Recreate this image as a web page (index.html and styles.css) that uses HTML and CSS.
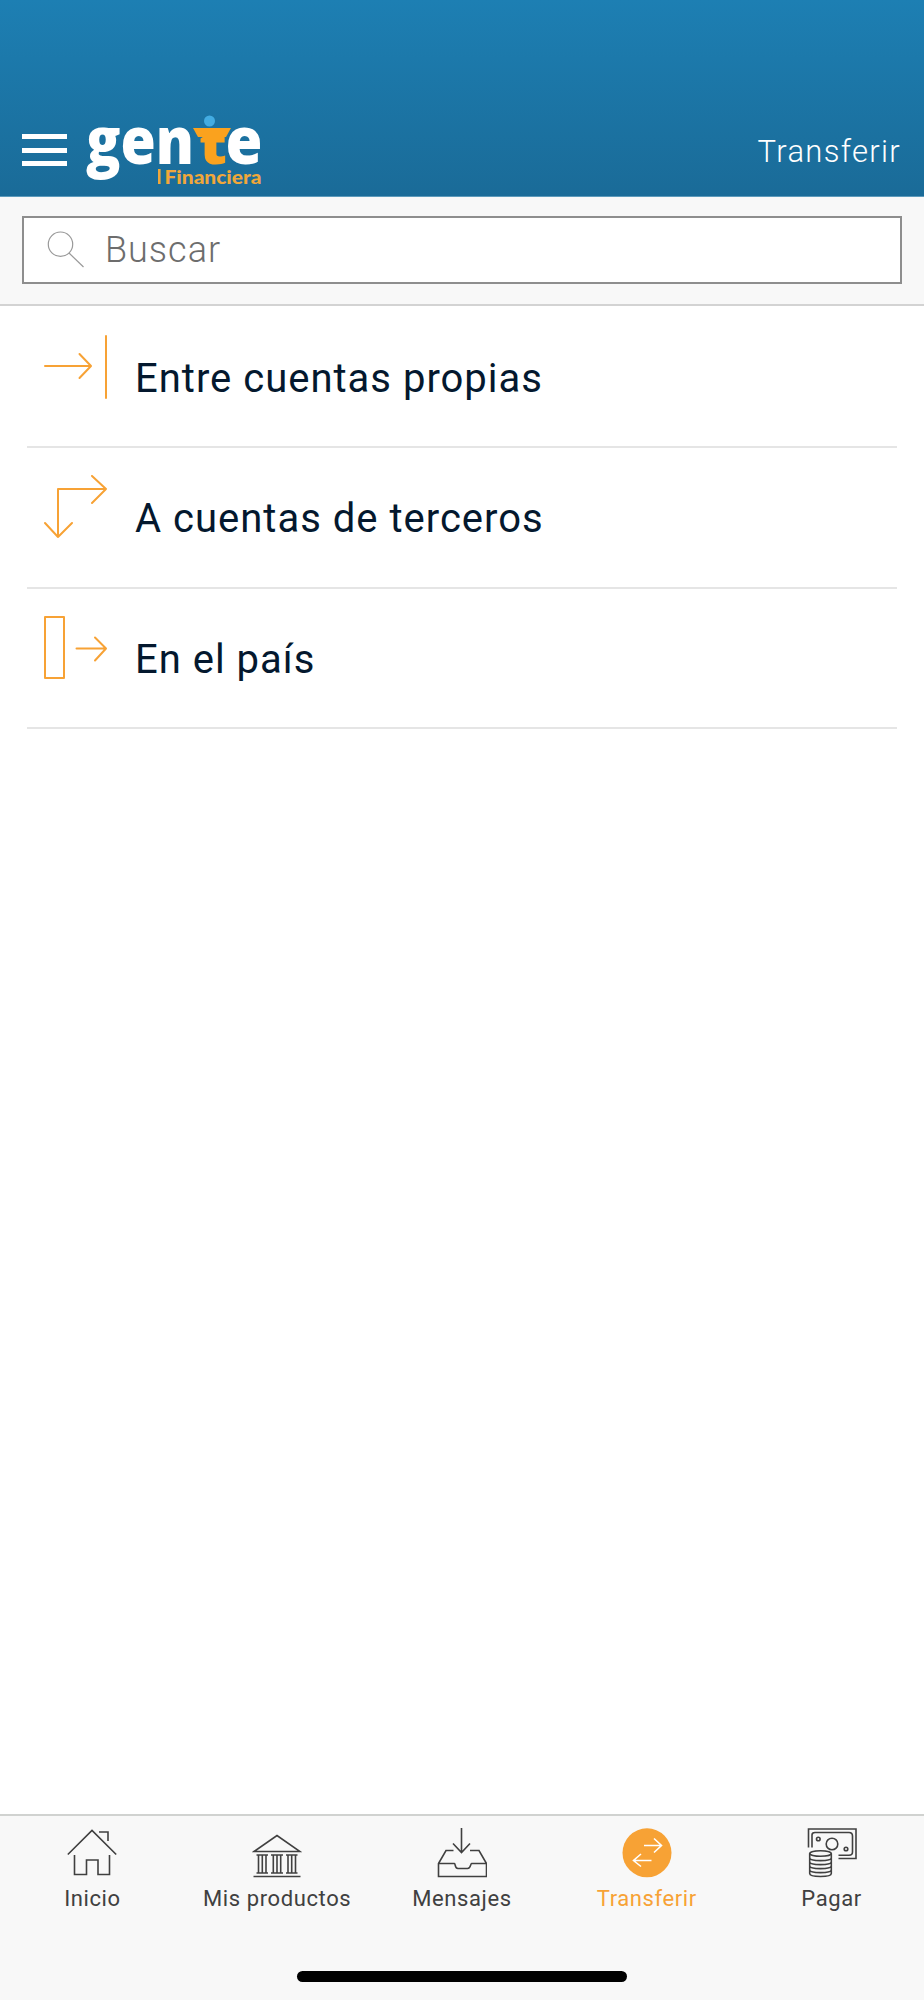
FILE: index.html
```html
<!DOCTYPE html>
<html lang="es">
<head>
    <meta charset="UTF-8">
    <meta name="viewport" content="width=device-width, initial-scale=1.0">
    <title>Transferir</title>
    <link rel="stylesheet" href="styles.css">
</head>
<body>
    <header class="header">
        <button class="menu" aria-label="Menú">
            <span></span>
            <span></span>
            <span></span>
        </button>
        <svg class="logo" width="184" height="76" viewBox="84 114 184 76">
            <g class="logo-name">
                <text x="86" y="164" textLength="108" lengthAdjust="spacingAndGlyphs">gen</text>
                <text class="logo-t" x="199" y="163.5" textLength="28" lengthAdjust="spacingAndGlyphs">t</text>
                <text x="225.5" y="164" textLength="37" lengthAdjust="spacingAndGlyphs">e</text>
            </g>
            <path d="M193 128H231L226 137H198Z" fill="#faa21e"/>
            <circle cx="209.5" cy="121" r="5.5" fill="#43ace2"/>
            <rect x="158" y="169" width="2.6" height="15" fill="#f0a73a"/>
            <text class="logo-sub" x="164.5" y="183.5" textLength="97" lengthAdjust="spacingAndGlyphs">Financiera</text>
        </svg>
        <h1>Transferir</h1>
    </header>

    <div class="search">
        <label class="search-box">
            <svg width="38" height="38" viewBox="0 0 38 38">
                <circle cx="13.5" cy="13.2" r="12.2"/>
                <path d="M22 22L36.5 36"/>
            </svg>
            <input type="text" placeholder="Buscar">
        </label>
    </div>

    <ul class="options">
        <li>
            <svg width="64" height="64" viewBox="0 0 64 64">
                <path d="M1 31H46M35.500 19L47 31L35.500 43M62 1V63"/>
            </svg>
            <span class="op1">Entre cuentas propias</span>
        </li>
        <li>
            <svg width="64" height="64" viewBox="0 0 64 64">
                <path d="M14 62V14H62M48 1L62 14L48 28M1 48L14 62L28 48"/>
            </svg>
            <span class="op2">A cuentas de terceros</span>
        </li>
        <li>
            <svg width="64" height="64" viewBox="0 0 64 64">
                <path d="M1 1H20V62H1ZM32.500 32.500H61M51 21.500L62 32.500L51 44.500"/>
            </svg>
            <span class="op3">En el país</span>
        </li>
    </ul>

    <nav class="tabs">
        <a class="tab">
            <svg width="50" height="50" viewBox="0 0 50 50">
                <path d="M.8 26.500L25 2.500L49.200 26.500M32 4H41V13M7.500 27V46.500H19.500V32H31V46.500H42.500V27"/>
            </svg>
            <span class="t1">Inicio</span>
        </a>
        <a class="tab">
            <svg width="50" height="50" viewBox="0 0 50 50">
                <path d="M2 23.500L25 7.500L48 23.500ZM1.500 48.500H48.500M4.500 27H16M4.500 45H16M19 27H31M19 45H31M34 27H45.500M34 45H45.500"/>
                <path d="M6.500 27V45M10.300 27V45M14 27V45M21.300 27V45M25 27V45M28.700 27V45M36 27V45M39.700 27V45M43.500 27V45"/>
            </svg>
            <span class="t2">Mis productos</span>
        </a>
        <a class="tab">
            <svg width="50" height="50" viewBox="0 0 50 50">
                <path d="M24.500 0V24.500M16 15.500L24.500 24.500L33 15.500M16.500 22.500H9L1.500 35.500V48.500H49.500V35.500L42 22.500H33M1.500 35.500H17.500C18.500 35.500 17.500 40.500 21 40.500H30.500C34 40.500 33.500 35.500 34.500 35.500H49.500"/>
            </svg>
            <span class="t3">Mensajes</span>
        </a>
        <a class="tab active">
            <svg width="50" height="50" viewBox="0 0 50 50">
                <circle cx="25" cy="24.800" r="24.500"/>
                <path d="M22 17.500H39M32 10.500L39.500 17.500L32 24.500M29.500 32.500H12M19 26L11.500 32.500L19 38.500"/>
            </svg>
            <span class="t4">Transferir</span>
        </a>
        <a class="tab">
            <svg width="50" height="50" viewBox="0 0 50 50">
                <path d="M1.500 19.500V1H49V30.500H31.500M5 19.500V7Q5 4.500 8 4.500H42Q45.500 4.500 45.500 8V24Q45.500 27.300 42 27.300H31.500"/>
                <circle cx="25" cy="16" r="5.800"/>
                <circle cx="11.300" cy="11" r="1.800"/>
                <circle cx="39" cy="21" r="1.800"/>
                <ellipse cx="13.500" cy="25.500" rx="10.800" ry="2.800"/>
                <path d="M2.700 25.500V45.500C2.700 49.500 24.300 49.500 24.300 45.500V25.500M2.700 30C2.700 33.500 24.300 33.500 24.300 30M2.700 34C2.700 37.500 24.300 37.500 24.300 34M2.700 38C2.700 41.500 24.300 41.500 24.300 38M2.700 42C2.700 45.500 24.300 45.500 24.300 42"/>
            </svg>
            <span class="t5">Pagar</span>
        </a>
        <div class="home-bar"></div>
    </nav>
</body>
</html>
```

FILE: styles.css
```css
* {
    box-sizing: border-box;
}
body {
    font-family: Roboto, Arial, sans-serif;
    margin: 0;
    height: 2000px;
    display: flex;
    flex-direction: column;
    background-color: #fff;
    color: #04182e;
}
.header {
    height: 197px;
    padding: 114px 23px 0 22px;
    display: flex;
    align-items: flex-start;
    background: linear-gradient(#1d7fb3, #1a6b98);
    border-bottom: 1px solid #5c9abb;
}
.menu {
    width: 45px;
    height: 32px;
    margin-top: 20px;
    padding: 0;
    display: flex;
    flex-direction: column;
    justify-content: space-between;
    background: none;
    border: none;
}
.menu span {
    height: 5px;
    background-color: #fff;
}
.logo {
    margin-left: 17px;
    overflow: visible;
}
.logo-name {
    font-family: "Open Sans", sans-serif;
    font-weight: 800;
    font-size: 66px;
    fill: #fff;
}
.logo-t {
    font-size: 53px;
    fill: #faa21e;
}
.logo-sub {
    font-family: Lato, sans-serif;
    font-weight: 900;
    font-size: 19.5px;
    fill: #f0a73a;
}
h1 {
    margin: 18px 0 0 auto;
    font-size: 31px;
    line-height: 40px;
    font-weight: 300;
    letter-spacing: 1.3px;
    color: #fff;
}
.search {
    height: 109px;
    padding: 19px 22px 0;
    background-color: #f8f8f8;
    border-bottom: 2px solid #d3d3d3;
}
.search-box {
    height: 68px;
    padding: 0 23px;
    display: flex;
    align-items: center;
    background-color: #fff;
    border: 2px solid #8e8e8e;
}
.search-box svg {
    fill: none;
    stroke: #999;
    stroke-width: 1.2;
}
.search-box input {
    flex: 1;
    margin-left: 20px;
    padding: 0;
    border: none;
    outline: none;
    font: 300 36px/60px Roboto, Arial, sans-serif;
    letter-spacing: 1px;
}
.search-box input::placeholder {
    color: #6d6d6d;
    opacity: 1;
}
.options {
    flex: 1;
    margin: 0;
    padding: 1.500px 27px 0;
    list-style: none;
}
.options li {
    height: 140.600px;
    padding: 27px 17px 0;
    display: flex;
    align-items: flex-start;
    border-bottom: 2px solid #e5e5e5;
    font-size: 40px;
    line-height: 48px;
    letter-spacing: 1px;
}
.options svg {
    margin-right: 27px;
    fill: none;
    stroke: #f7a235;
    stroke-width: 2;
    stroke-linecap: round;
    stroke-linejoin: round;
}
.options span {
    margin-top: 20px;
}
.tabs {
    height: 186px;
    padding-top: 12px;
    display: grid;
    grid-template-columns: repeat(5, 1fr);
    grid-template-rows: 1fr auto;
    background-color: #f8f8f8;
    border-top: 2px solid #d0d2d0;
}
.tab {
    display: flex;
    flex-direction: column;
    align-items: center;
    font-size: 22px;
    line-height: 28px;
    letter-spacing: 0.600px;
    color: #404040;
}
.tab svg {
    margin-bottom: 7px;
    fill: none;
    stroke: #404040;
    stroke-width: 1.600;
}
.active {
    color: #f7a235;
}
.active circle {
    fill: #f7a235;
    stroke: none;
}
.active path {
    stroke: #fff;
}
.home-bar {
    grid-column: 1 / -1;
    justify-self: center;
    width: 330px;
    height: 11px;
    margin-bottom: 18px;
    border-radius: 6px;
    background-color: #000;
}
```
